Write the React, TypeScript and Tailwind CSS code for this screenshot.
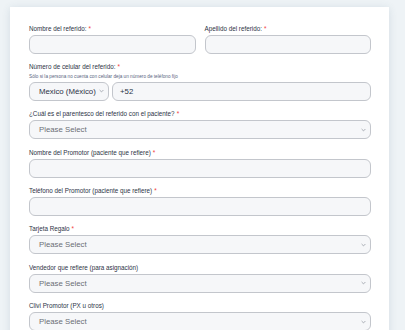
const font = { fontFamily: '"Liberation Sans", Arial, sans-serif' };

function Label({ text, required }: { text: string; required?: boolean }) {
  return (
    <div className="mb-[2px] h-[8px] text-[6.3px] leading-[8px] text-[#2c3345]">
      {text}
      {required ? <span className="ml-[2px] text-[#f23a3c]">*</span> : null}
    </div>
  );
}

function Chevron() {
  return (
    <svg width="5" height="4" viewBox="0 0 5 4" className="shrink-0">
      <path d="M0.6 1 L2.5 2.9 L4.4 1" fill="none" stroke="#8a8f99" strokeWidth="0.7" />
    </svg>
  );
}

function TextBox({ value }: { value?: string }) {
  return (
    <div className="flex h-[19px] flex-1 items-center rounded-[6px] border border-[#c3c6cc] bg-[#f6f7f9] px-[7px] text-[7.8px] text-[#2c3345]">
      {value}
    </div>
  );
}

function SelectBox({ value, muted }: { value: string; muted?: boolean }) {
  return (
    <div
      className={`flex h-[19px] flex-1 items-center justify-between rounded-[6px] border border-[#c3c6cc] bg-[#f6f7f9] pl-[9px] pr-[4px] text-[7.8px] ${
        muted ? "text-[#6b6e75]" : "text-[#2c3345]"
      }`}
    >
      <span>{value}</span>
      <Chevron />
    </div>
  );
}

function Field({
  label,
  required,
  children,
}: {
  label: string;
  required?: boolean;
  children: React.ReactNode;
}) {
  return (
    <div className="flex flex-col">
      <Label text={label} required={required} />
      <div className="flex">{children}</div>
    </div>
  );
}

export default function App() {
  return (
    <div style={font} className="h-[330px] w-[405px] overflow-hidden bg-[#eef3f6] pl-[10px] pr-[16px] pt-[7px]">
      <div className="h-[400px] w-[379px] bg-white pl-[19px] pr-[18px] pt-[18px] shadow-[0_1px_8px_rgba(60,90,120,0.14)]">
        <div className="flex flex-col gap-[9.4px]">
          <div className="flex gap-[9px]">
            <div className="flex flex-1 flex-col">
              <Label text="Nombre del referido:" required />
              <div className="flex">
                <TextBox />
              </div>
            </div>
            <div className="flex flex-1 flex-col">
              <Label text="Apellido del referido:" required />
              <div className="flex">
                <TextBox />
              </div>
            </div>
          </div>

          <div className="flex flex-col">
            <Label text="Número de celular del referido:" required />
            <div className="mb-[1.5px] h-[7px] text-[4.7px] leading-[7px] text-[#57647e]">
              Sólo si la persona no cuenta con celular deja un número de teléfono fijo
            </div>
            <div className="flex gap-[3px]">
              <div className="flex w-[80px]">
                <SelectBox value="Mexico (México)" />
              </div>
              <TextBox value="+52" />
            </div>
          </div>

          <Field label="¿Cuál es el parentesco del referido con el paciente?" required>
            <SelectBox value="Please Select" muted />
          </Field>
          <Field label="Nombre del Promotor (paciente que refiere)" required>
            <TextBox />
          </Field>
          <Field label="Teléfono del Promotor (paciente que refiere)" required>
            <TextBox />
          </Field>
          <Field label="Tarjeta Regalo" required>
            <SelectBox value="Please Select" muted />
          </Field>
          <Field label="Vendedor que refiere (para asignación)">
            <SelectBox value="Please Select" muted />
          </Field>
          <Field label="Clivi Promotor (PX u otros)">
            <SelectBox value="Please Select" muted />
          </Field>
        </div>
      </div>
    </div>
  );
}
